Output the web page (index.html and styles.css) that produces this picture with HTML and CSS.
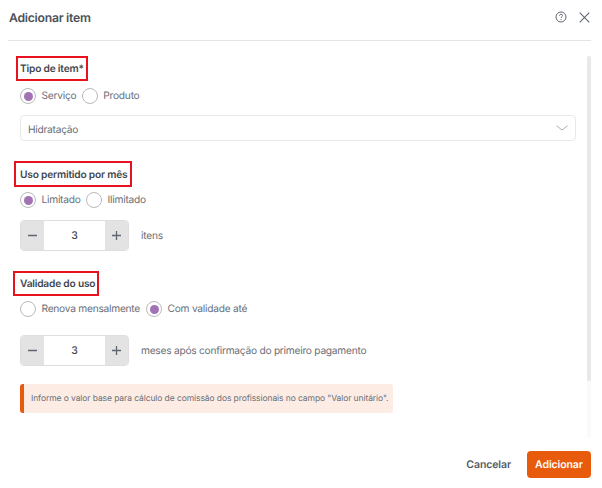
FILE: index.html
```
<!DOCTYPE html>
<html lang="pt-BR">
<head>
<meta charset="utf-8">
<title>Adicionar item</title>
<link rel="stylesheet" href="styles.css">
</head>
<body>
<div class="modal">
  <header class="header">
    <h1 class="title">Adicionar item</h1>
    <div class="header-actions">
      <svg class="icon-help" width="12" height="12" viewBox="0 0 12 12" fill="none" stroke="#5f6670" stroke-width="1"><circle cx="6" cy="6" r="5"/><path d="M4.5 4.7c0-.9.7-1.400 1.500-1.400s1.500.5 1.500 1.300c0 1.200-1.500 1.200-1.500 2.300"/><path d="M6 8.200v.9"/></svg>
      <svg class="icon-close" width="11" height="11" viewBox="0 0 11 11" fill="none" stroke="#5f6670" stroke-width="1.1"><path d="M.7.7l9.600 9.600M10.300.7L.7 10.300"/></svg>
    </div>
  </header>
  <div class="body">
    <div class="content">
      <h2 class="label label-tipo">Tipo de item*</h2>
      <div class="radios">
        <label class="radio"><span class="dot on"></span>Serviço</label>
        <label class="radio"><span class="dot"></span>Produto</label>
      </div>
      <div class="select">
        <span class="select-text">Hidratação</span>
        <svg width="12" height="6" viewBox="0 0 12 6" fill="none" stroke="#a9adb2" stroke-width="1"><path d="M.5.7L6 5 11.500.7"/></svg>
      </div>
      <h2 class="label label-uso">Uso permitido por mês</h2>
      <div class="radios">
        <label class="radio"><span class="dot on"></span>Limitado</label>
        <label class="radio"><span class="dot"></span>Ilimitado</label>
      </div>
      <div class="stepper-row row-itens">
        <div class="stepper">
          <span class="step-btn"><svg width="11" height="11" viewBox="0 0 11 11" stroke="#5f6670" stroke-width="1.3"><path d="M1 5.500h9"/></svg></span>
          <span class="step-value">3</span>
          <span class="step-btn"><svg width="11" height="11" viewBox="0 0 11 11" stroke="#5f6670" stroke-width="1.3"><path d="M1 5.500h9M5.500 1v9"/></svg></span>
        </div>
        <span class="step-text">itens</span>
      </div>
      <h2 class="label label-validade">Validade do uso</h2>
      <div class="radios radios-validade">
        <label class="radio"><span class="dot"></span>Renova mensalmente</label>
        <label class="radio"><span class="dot on"></span>Com validade até</label>
      </div>
      <div class="stepper-row row-meses">
        <div class="stepper">
          <span class="step-btn"><svg width="11" height="11" viewBox="0 0 11 11" stroke="#5f6670" stroke-width="1.3"><path d="M1 5.500h9"/></svg></span>
          <span class="step-value">3</span>
          <span class="step-btn"><svg width="11" height="11" viewBox="0 0 11 11" stroke="#5f6670" stroke-width="1.3"><path d="M1 5.500h9M5.500 1v9"/></svg></span>
        </div>
        <span class="step-text">meses após confirmação do primeiro pagamento</span>
      </div>
      <div class="alert">Informe o valor base para cálculo de comissão dos profissionais no campo "Valor unitário".</div>
    </div>
    <div class="scrollbar"><div class="thumb"></div></div>
  </div>
  <footer class="footer">
    <button class="btn-cancel" type="button">Cancelar</button>
    <button class="btn-add" type="button">Adicionar</button>
  </footer>
</div>
</body>
</html>
```
FILE: styles.css
```
* { box-sizing: border-box; }
html, body { margin: 0; padding: 0; background: #fff; }
body { font-family: Inter, "Liberation Sans", sans-serif; color: #5f6670; width: 602px; height: 488px; overflow: hidden; text-rendering: geometricPrecision; }
.modal { width: 602px; height: 488px; padding: 0 11px 0 8px; display: flex; flex-direction: column; }
.header { height: 41px; flex: none; border-bottom: 1px solid #e4e4e4; display: flex; align-items: center; justify-content: space-between; padding: 0 1px 6px 1px; }
.title { margin: 0; font-size: 12.200px; letter-spacing: -0.250px; font-weight: 600; color: #4b5159; }
.header-actions { display: flex; align-items: center; gap: 12px; }
.body { height: 397px; flex: none; position: relative; display: flex; }
.content { flex: 1; padding: 15px 15px 0 12px; }
.label { margin: 0 0 0 -4px; width: fit-content; border: 2px solid #e8121f; font-size: 10.200px; letter-spacing: -0.200px; font-weight: 600; color: #42474e; line-height: 15px; padding: 4px 2px 2px 2px; }
.label-uso { margin-left: -6px; margin-top: 20px; padding: 5px 3px 2px 4px; }
.label-validade { margin-left: -7px; margin-top: 20px; padding: 4px 2px 2px 5px; }
.radios { display: flex; gap: 5.500px; margin-top: 6px; height: 18px; align-items: center; }
.label-uso + .radios { margin-top: 4px; }
.radios-validade { margin-top: 4px; gap: 6px; }
.radio { display: flex; align-items: center; gap: 5.500px; font-size: 10.200px; letter-spacing: -0.250px; color: #6a7078; }
.dot { width: 16px; height: 16px; border-radius: 50%; border: 1px solid #b9b9b9; background: #fff; position: relative; flex: none; }
.dot.on::after { content: ""; position: absolute; inset: 2.500px; border-radius: 50%; background: #a173b5; }
.select { height: 26px; margin-top: 10px; border: 1px solid #e8e8e8; border-radius: 4px; display: flex; align-items: center; justify-content: space-between; padding: 0 7px 0 7px; font-size: 10.200px; letter-spacing: -0.250px; color: #6a7078; }
.select-text { padding-top: 3px; }
.stepper-row { display: flex; align-items: center; gap: 12px; }
.row-itens { margin-top: 11px; }
.row-meses { margin-top: 17px; }
.stepper { width: 109px; height: 31px; display: flex; border: 1px solid #dedede; border-radius: 4px; overflow: hidden; }
.step-btn { width: 23px; background: #e3e3e3; display: flex; align-items: center; justify-content: center; flex: none; }
.step-value { flex: 1; text-align: center; font-size: 10.500px; line-height: 29px; font-weight: 500; color: #42474e; }
.step-text { font-size: 10.200px; letter-spacing: -0.250px; color: #6a7078; }
.alert { margin-top: 18px; width: 373px; height: 29px; background: #fdece4; border-left: 4px solid #e85a0c; border-radius: 3px; font-size: 8.500px; letter-spacing: -0.090px; color: #6a7078; display: flex; align-items: center; padding: 1px 0 0 7px; white-space: nowrap; }
.scrollbar { position: absolute; right: 0; top: 15px; width: 4px; height: 382px; background: #fafafa; }
.thumb { height: 325px; background: #e8e8e8; border-radius: 2px; }
.footer { flex: 1; display: flex; justify-content: flex-end; align-items: flex-start; padding-top: 13px; gap: 16px; }
.btn-cancel { border: 0; background: none; padding: 0; font: 600 10.500px Inter, sans-serif; letter-spacing: -0.100px; text-rendering: geometricPrecision; color: #565c64; height: 27px; }
.btn-add { border: 0; width: 64px; height: 27px; border-radius: 4px; background: #e85a0c; color: #fff; font: 600 10.500px Inter, sans-serif; letter-spacing: -0.100px; text-rendering: geometricPrecision; padding: 0; }
```
